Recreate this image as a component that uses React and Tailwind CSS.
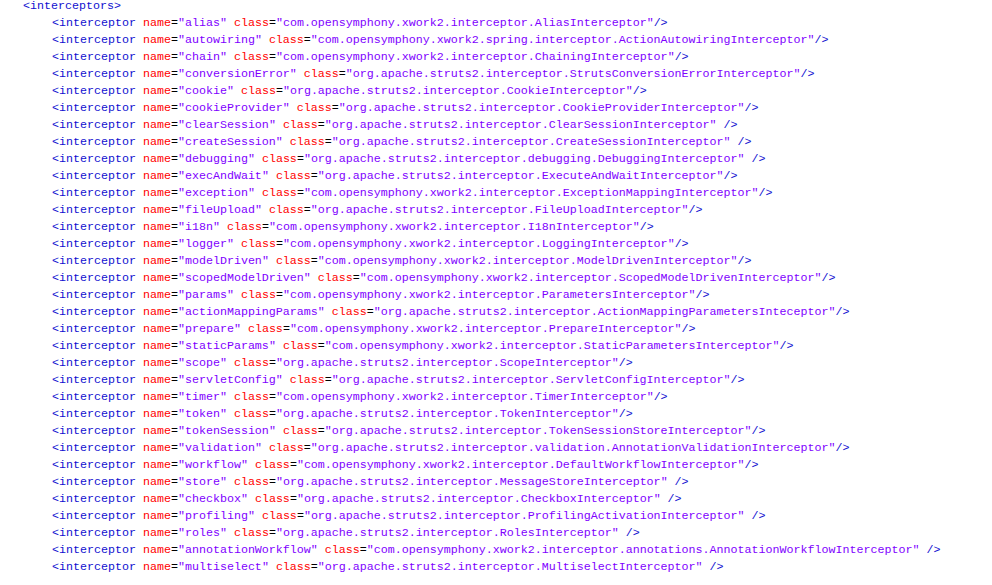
const interceptors = [
  ["alias", "com.opensymphony.xwork2.interceptor.AliasInterceptor", "/>"],
  ["autowiring", "com.opensymphony.xwork2.spring.interceptor.ActionAutowiringInterceptor", "/>"],
  ["chain", "com.opensymphony.xwork2.interceptor.ChainingInterceptor", "/>"],
  ["conversionError", "org.apache.struts2.interceptor.StrutsConversionErrorInterceptor", "/>"],
  ["cookie", "org.apache.struts2.interceptor.CookieInterceptor", "/>"],
  ["cookieProvider", "org.apache.struts2.interceptor.CookieProviderInterceptor", "/>"],
  ["clearSession", "org.apache.struts2.interceptor.ClearSessionInterceptor", " />"],
  ["createSession", "org.apache.struts2.interceptor.CreateSessionInterceptor", " />"],
  ["debugging", "org.apache.struts2.interceptor.debugging.DebuggingInterceptor", " />"],
  ["execAndWait", "org.apache.struts2.interceptor.ExecuteAndWaitInterceptor", "/>"],
  ["exception", "com.opensymphony.xwork2.interceptor.ExceptionMappingInterceptor", "/>"],
  ["fileUpload", "org.apache.struts2.interceptor.FileUploadInterceptor", "/>"],
  ["i18n", "com.opensymphony.xwork2.interceptor.I18nInterceptor", "/>"],
  ["logger", "com.opensymphony.xwork2.interceptor.LoggingInterceptor", "/>"],
  ["modelDriven", "com.opensymphony.xwork2.interceptor.ModelDrivenInterceptor", "/>"],
  ["scopedModelDriven", "com.opensymphony.xwork2.interceptor.ScopedModelDrivenInterceptor", "/>"],
  ["params", "com.opensymphony.xwork2.interceptor.ParametersInterceptor", "/>"],
  ["actionMappingParams", "org.apache.struts2.interceptor.ActionMappingParametersInteceptor", "/>"],
  ["prepare", "com.opensymphony.xwork2.interceptor.PrepareInterceptor", "/>"],
  ["staticParams", "com.opensymphony.xwork2.interceptor.StaticParametersInterceptor", "/>"],
  ["scope", "org.apache.struts2.interceptor.ScopeInterceptor", "/>"],
  ["servletConfig", "org.apache.struts2.interceptor.ServletConfigInterceptor", "/>"],
  ["timer", "com.opensymphony.xwork2.interceptor.TimerInterceptor", "/>"],
  ["token", "org.apache.struts2.interceptor.TokenInterceptor", "/>"],
  ["tokenSession", "org.apache.struts2.interceptor.TokenSessionStoreInterceptor", "/>"],
  ["validation", "org.apache.struts2.interceptor.validation.AnnotationValidationInterceptor", "/>"],
  ["workflow", "com.opensymphony.xwork2.interceptor.DefaultWorkflowInterceptor", "/>"],
  ["store", "org.apache.struts2.interceptor.MessageStoreInterceptor", " />"],
  ["checkbox", "org.apache.struts2.interceptor.CheckboxInterceptor", " />"],
  ["profiling", "org.apache.struts2.interceptor.ProfilingActivationInterceptor", " />"],
  ["roles", "org.apache.struts2.interceptor.RolesInterceptor", " />"],
  ["annotationWorkflow", "com.opensymphony.xwork2.interceptor.annotations.AnnotationWorkflowInterceptor", " />"],
  ["multiselect", "org.apache.struts2.interceptor.MultiselectInterceptor", " />"],
];

const App = () => {
  return (
    <div className="w-[992px] h-[585px] overflow-hidden bg-white font-['Liberation_Mono','Courier_New',monospace] text-[11.67px] leading-[17px] whitespace-pre">
      <div className="pl-[23px] -mt-[2px]">
        <div className="text-[#1010d0]">{"<interceptors>"}</div>
        {interceptors.map(([name, cls, close]) => (
          <div key={name} className="pl-[29px]">
            <span className="text-[#1010d0]">{"<interceptor "}</span>
            <span className="text-[#ff0000]">name</span>
            <span className="text-black">=</span>
            <span className="text-[#8000ff]">"{name}" </span>
            <span className="text-[#ff0000]">class</span>
            <span className="text-black">=</span>
            <span className="text-[#8000ff]">"{cls}"</span>
            <span className="text-[#1010d0]">{close}</span>
          </div>
        ))}
      </div>
    </div>
  );
};

export default App;
